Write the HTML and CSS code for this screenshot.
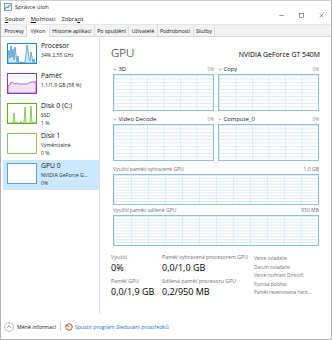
FILE: index.html
```html
<!DOCTYPE html>
<html lang="cs">
<head>
<meta charset="utf-8">
<title>Správce úloh</title>
<link rel="stylesheet" href="styles.css">
</head>
<body>
<div class="window">
  <header class="head">
    <div class="title">
      <svg class="app-icon" viewBox="0 0 8 8"><rect x="0.5" y="0.5" width="7" height="7" fill="#e4eff8" stroke="#5b8fc4" stroke-width="0.8"/><polyline points="1,6 2.5,3.5 4,5 5.5,2 7,3.5" fill="none" stroke="#2a8a3a" stroke-width="0.8"/></svg>
      <span>Správce úloh</span>
    </div>
    <nav class="menu">
      <span class="mi"><u>S</u>oubor</span>
      <span class="mi"><u>M</u>ožnosti</span>
      <span class="mi">Zobra<u>z</u>it</span>
    </nav>
    <div class="controls">
      <span class="ctrl"><svg viewBox="0 0 6 6"><line x1="0.5" y1="3" x2="5.5" y2="3" stroke="#333" stroke-width="0.6"/></svg></span>
      <span class="ctrl"><svg viewBox="0 0 6 6"><rect x="0.8" y="0.8" width="4.4" height="4.4" fill="none" stroke="#333" stroke-width="0.6"/></svg></span>
      <span class="ctrl"><svg viewBox="0 0 6 6"><path d="M0.8 0.8L5.2 5.2M5.2 0.8L0.8 5.2" stroke="#333" stroke-width="0.6"/></svg></span>
    </div>
  </header>

  <div class="tabs">
    <span class="tab">Procesy</span>
    <span class="tab active">Výkon</span>
    <span class="tab">Historie aplikací</span>
    <span class="tab">Po spuštění</span>
    <span class="tab">Uživatelé</span>
    <span class="tab">Podrobnosti</span>
    <span class="tab">Služby</span>
  </div>

  <div class="main">
    <aside class="sidebar">
      <div class="item">
        <div class="thumb cpu">
          <svg viewBox="0 0 28 19" preserveAspectRatio="none"><polygon points="0,19 0,12 1,6 2,14 3,2 4,13 5,5 6,16 7,3 8,11 9,18 10,12 11,19 13,18 15,19 16,19 17,17 18,10 19,1 20,7 21,15 22,17 23,8 24,13 25,18 26,15 27,19 28,19" fill="#d4e7f4" stroke="#117dbb" stroke-width="0.6"/></svg>
        </div>
        <div class="info">
          <div class="name">Procesor</div>
          <div class="sub">34% 2,55 GHz</div>
        </div>
      </div>
      <div class="item">
        <div class="thumb mem">
          <svg viewBox="0 0 28 19" preserveAspectRatio="none"><polygon points="0,19 0,12 2,11 3,8 5,9 7,10 9,9 11,10 13,10 15,10 17,10 19,10 21,9 23,8 25,8 28,8 28,19" fill="#efe3f3" stroke="#8b12ae" stroke-width="0.6"/></svg>
        </div>
        <div class="info">
          <div class="name">Paměť</div>
          <div class="sub">1,1/1,9 GB (58 %)</div>
        </div>
      </div>
      <div class="item">
        <div class="thumb disk">
          <svg viewBox="0 0 28 19" preserveAspectRatio="none"><polyline points="0,19 5,19 6,9 7,19 9,18 10,19 12,19 13,17 14,19 16,19 17,3 18,19 22,19 23,2 24,19 26,18 28,19" fill="#e6f4dc" stroke="#4da60c" stroke-width="0.6"/></svg>
        </div>
        <div class="info">
          <div class="name">Disk 0 (C:)</div>
          <div class="sub">SSD</div>
          <div class="sub">1 %</div>
        </div>
      </div>
      <div class="item">
        <div class="thumb disk1"></div>
        <div class="info">
          <div class="name">Disk 1</div>
          <div class="sub">Vyměnitelné</div>
          <div class="sub">0 %</div>
        </div>
      </div>
      <div class="item sel">
        <div class="thumb gpu"></div>
        <div class="info">
          <div class="name">GPU 0</div>
          <div class="sub">NVIDIA GeForce G...</div>
          <div class="sub">0%</div>
        </div>
      </div>
    </aside>

    <section class="content">
      <div class="gpu-head">
        <span class="big">GPU</span>
        <span class="model">NVIDIA GeForce GT 540M</span>
      </div>

      <div class="pair">
        <div class="cell">
          <div class="glabel"><span class="gname"><svg class="chev" viewBox="0 0 4 3"><polyline points="0.5,0.8 2,2.2 3.5,0.8" fill="none" stroke="#555" stroke-width="0.5"/></svg>3D</span><span class="pct">0%</span></div>
          <div class="graph small"></div>
        </div>
        <div class="cell">
          <div class="glabel"><span class="gname"><svg class="chev" viewBox="0 0 4 3"><polyline points="0.5,0.8 2,2.2 3.5,0.8" fill="none" stroke="#555" stroke-width="0.5"/></svg>Copy</span><span class="pct">0%</span></div>
          <div class="graph small"></div>
        </div>
      </div>

      <div class="pair second">
        <div class="cell">
          <div class="glabel"><span class="gname"><svg class="chev" viewBox="0 0 4 3"><polyline points="0.5,0.8 2,2.2 3.5,0.8" fill="none" stroke="#555" stroke-width="0.5"/></svg>Video Decode</span><span class="pct">0%</span></div>
          <div class="graph small"></div>
        </div>
        <div class="cell">
          <div class="glabel"><span class="gname"><svg class="chev" viewBox="0 0 4 3"><polyline points="0.5,0.8 2,2.2 3.5,0.8" fill="none" stroke="#555" stroke-width="0.5"/></svg>Compute_0</span><span class="pct">0%</span></div>
          <div class="graph small"></div>
        </div>
      </div>

      <div class="memblock first">
        <div class="mlabel"><span>Využití paměti vyhrazené GPU</span><span>1,0 GB</span></div>
        <div class="graph wide"></div>
      </div>
      <div class="memblock">
        <div class="mlabel"><span>Využití paměti sdílené GPU</span><span>950 MB</span></div>
        <div class="graph wide"></div>
      </div>

      <div class="stats">
        <div class="stat">
          <div class="slabel">Využití</div>
          <div class="sval">0%</div>
          <div class="slabel">Paměť GPU</div>
          <div class="sval">0,0/1,9 GB</div>
        </div>
        <div class="stat">
          <div class="slabel">Paměť vyhrazená procesorem GPU</div>
          <div class="sval">0,0/1,0 GB</div>
          <div class="slabel">Sdílená paměť procesoru GPU</div>
          <div class="sval">0,2/950 MB</div>
        </div>
        <div class="props">
          <div>Verze ovladače:</div>
          <div>Datum ovladače:</div>
          <div>Verze rozhraní DirectX:</div>
          <div>Fyzická poloha:</div>
          <div>Paměť rezervovaná hard...</div>
        </div>
      </div>
    </section>
  </div>

  <footer class="foot">
    <span class="less">
      <svg class="circ" viewBox="0 0 10 10"><circle cx="5" cy="5" r="4.4" fill="#fff" stroke="#8a8a8a" stroke-width="0.6"/><polyline points="3,5.8 5,3.8 7,5.8" fill="none" stroke="#666" stroke-width="0.7"/></svg>
      Méně informací
    </span>
    <span class="sep"></span>
    <span class="res">
      <svg class="gauge" viewBox="0 0 8 8"><circle cx="4" cy="4" r="3.3" fill="#fbeee0" stroke="#a0522d" stroke-width="0.9"/><line x1="4" y1="4" x2="2.2" y2="2.3" stroke="#6b3a1a" stroke-width="0.7"/></svg>
      <span class="link">Spustit program Sledování prostředků</span>
    </span>
  </footer>
</div>
</body>
</html>
```

FILE: styles.css
```css
html, body {
  margin: 0;
  padding: 0;
  background: #fff;
}

body {
  font-family: "Open Sans", "Noto Sans", sans-serif;
  color: #000;
}

.window {
  width: 332px;
  height: 340px;
  box-sizing: border-box;
  border: 1px solid #b4b4b4;
  border-top-color: #d0d0d0;
  display: flex;
  flex-direction: column;
  overflow: hidden;
  background: #fff;
}

/* header */
.head {
  display: grid;
  grid-template-columns: 1fr auto;
  grid-template-rows: 12px 11px;
  flex: none;
}

.title {
  display: flex;
  align-items: center;
  gap: 3px;
  padding-left: 3px;
  font-size: 5.6px;
  color: #222;
}

.app-icon {
  width: 8px;
  height: 8px;
}

.menu {
  grid-row: 2;
  grid-column: 1;
  display: flex;
  align-items: center;
  padding-left: 1px;
  font-size: 5.8px;
  color: #111;
}

.mi {
  padding: 0 3px;
}

.mi u {
  text-decoration-thickness: 0.4px;
  text-underline-offset: 0.8px;
}

.controls {
  grid-row: 1 / span 2;
  grid-column: 2;
  display: flex;
  align-items: center;
  padding-top: 5px;
}

.ctrl {
  width: 20px;
  display: flex;
  justify-content: center;
}

.ctrl svg {
  width: 5px;
  height: 5px;
}

/* tabs */
.tabs {
  flex: none;
  display: flex;
  height: 11px;
  background: #f2f2f2;
  border-top: 1px solid #e6e6e6;
  border-bottom: 1px solid #d9d9d9;
  padding-left: 1px;
  font-size: 5.3px;
  color: #111;
}

.tab {
  display: flex;
  align-items: center;
  padding: 0 2.4px;
  border-right: 1px solid #dcdcdc;
}

.tab.active {
  background: #fff;
  margin-bottom: -1px;
  padding: 0 3.4px;
}

/* main */
.main {
  flex: 1;
  display: flex;
  min-height: 0;
}

.sidebar {
  width: 98px;
  flex: none;
  border-right: 1px solid #dedede;
  padding-top: 3px;
  display: flex;
  flex-direction: column;
}

.item {
  display: flex;
  align-items: flex-start;
  height: 30px;
  box-sizing: border-box;
  padding-left: 6px;
  gap: 4px;
}

.item.sel {
  background: #cce8ff;
  margin-left: 2px;
  padding-left: 4px;
}

.thumb {
  width: 30px;
  height: 21px;
  margin-top: 3px;
  box-sizing: border-box;
  border: 1px solid;
  flex: none;
  background: #fff;
}

.thumb svg {
  display: block;
  width: 100%;
  height: 100%;
}

.thumb.cpu { border-color: #2a8ac6; }
.thumb.mem { border-color: #9a3cb8; }
.thumb.disk { border-color: #62b02a; }
.thumb.disk1 { border-color: #8fc86a; }
.thumb.gpu { border-color: #5aa2d4; }

.info {
  padding-top: 1px;
  white-space: nowrap;
}

.name {
  font-size: 6.8px;
  line-height: 10px;
  color: #111;
}

.sub {
  font-size: 5.1px;
  line-height: 8px;
  color: #2a2a2a;
}

/* content */
.content {
  flex: 1;
  min-width: 0;
  padding: 0 12px 0 13px;
}

.gpu-head {
  display: flex;
  justify-content: space-between;
  align-items: baseline;
  height: 27px;
  box-sizing: border-box;
  padding-top: 10px;
}

.big {
  font-size: 11.5px;
  font-weight: 350;
  line-height: 12px;
  margin-left: -2px;
  color: #000;
}

.model {
  font-size: 6.9px;
  line-height: 12px;
  margin-right: -1px;
}

.pair {
  display: grid;
  grid-template-columns: 1fr 1fr;
  column-gap: 4px;
}

.pair.second {
  margin-top: 3px;
}

.glabel {
  height: 10px;
  display: flex;
  justify-content: space-between;
  align-items: center;
}

.gname {
  display: flex;
  align-items: center;
  gap: 1.5px;
  font-size: 5.9px;
  color: #222;
}

.chev {
  width: 4px;
  height: 3px;
}

.pct {
  font-size: 4.6px;
  color: #8a8a8a;
}

.graph {
  box-sizing: border-box;
  border: 1px solid #8fc1df;
  background-color: #fff;
  background-image:
    linear-gradient(to right, #dcebf5 1px, transparent 1px),
    linear-gradient(to bottom, #dcebf5 1px, transparent 1px);
}

.graph.small {
  height: 37px;
  background-size: calc(100% / 6) 100%, 100% 10%;
}

.graph.wide {
  height: 31px;
  background-size: calc(100% / 12) 100%, 100% 10%;
}

.memblock.first {
  margin-top: 3px;
}

.mlabel {
  height: 10px;
  display: flex;
  justify-content: space-between;
  align-items: center;
  font-size: 5.1px;
  color: #6e6e6e;
}

/* stats */
.stats {
  display: grid;
  grid-template-columns: 51px 92px 1fr;
  margin-top: 8px;
  margin-left: -2px;
}

.slabel {
  font-size: 5.3px;
  line-height: 7px;
  color: #707070;
  white-space: nowrap;
}

.sval {
  font-size: 9px;
  line-height: 13px;
  margin-bottom: 4px;
  white-space: nowrap;
}

.props {
  font-size: 4.7px;
  line-height: 8.5px;
  color: #707070;
  white-space: nowrap;
}

/* footer */
.foot {
  flex: none;
  height: 25px;
  display: flex;
  align-items: center;
  padding-left: 3px;
  font-size: 5.3px;
  color: #111;
}

.less {
  display: flex;
  align-items: center;
  gap: 3px;
}

.circ {
  width: 10px;
  height: 10px;
}

.sep {
  width: 1px;
  height: 9px;
  background: #cfcfcf;
  margin: 0 4px 0 4px;
}

.res {
  display: flex;
  align-items: center;
  gap: 2px;
}

.gauge {
  width: 8px;
  height: 8px;
}

.link {
  color: #1a6fc4;
}
```
